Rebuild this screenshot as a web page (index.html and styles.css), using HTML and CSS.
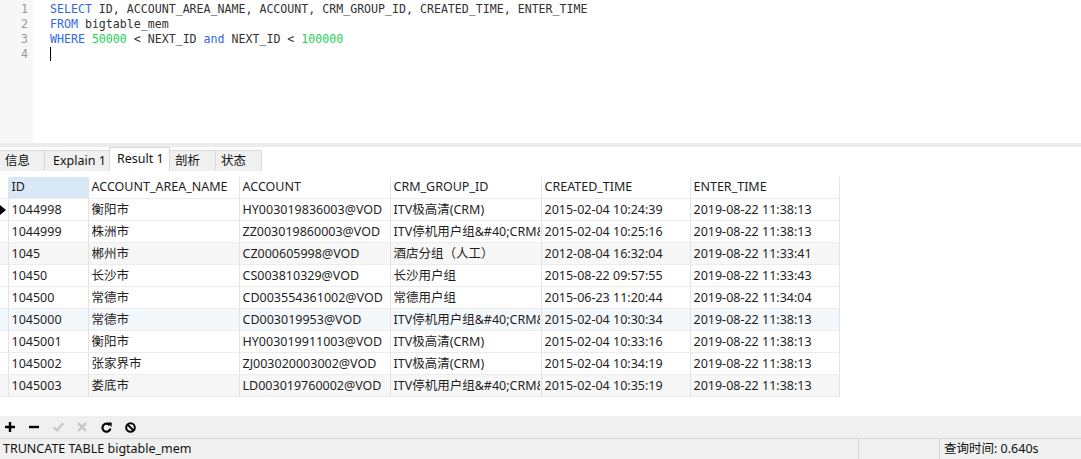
FILE: index.html
```html
<!DOCTYPE html>
<html lang="zh">
<head>
<meta charset="utf-8">
<title>Query</title>
<link rel="stylesheet" href="styles.css">
</head>
<body>
<div class="app">
  <div class="editor">
    <div class="gutter">
      <div class="ln">1</div>
      <div class="ln">2</div>
      <div class="ln">3</div>
      <div class="ln">4</div>
    </div>
    <div class="code">
      <div class="line"><span class="kw">SELECT</span> ID, ACCOUNT_AREA_NAME, ACCOUNT, CRM_GROUP_ID, CREATED_TIME, ENTER_TIME</div>
      <div class="line"><span class="kw">FROM</span> bigtable_mem</div>
      <div class="line"><span class="kw">WHERE</span> <span class="num">50000</span> &lt; NEXT_ID <span class="kw">and</span> NEXT_ID &lt; <span class="num">100000</span></div>
      <div class="line"><span class="cursor"></span></div>
    </div>
  </div>
  <div class="splitter"></div>
  <div class="tabs">
    <div class="tab w45">信息</div>
    <div class="tab w65">Explain 1</div>
    <div class="tab active w60">Result 1</div>
    <div class="tab w46">剖析</div>
    <div class="tab w46">状态</div>
  </div>
  <div class="grid-area">
    <table class="grid">
      <colgroup>
        <col class="c-ind"><col class="c-id"><col class="c-151"><col class="c-151"><col class="c-151"><col class="c-149"><col class="c-149">
      </colgroup>
      <thead>
        <tr><th class="ind"></th><th class="sel">ID</th><th>ACCOUNT_AREA_NAME</th><th>ACCOUNT</th><th>CRM_GROUP_ID</th><th>CREATED_TIME</th><th>ENTER_TIME</th></tr>
      </thead>
      <tbody>
        <tr><td class="ind"><span class="pointer"></span></td><td>1044998</td><td>衡阳市</td><td>HY003019836003@VOD</td><td>ITV极高清(CRM)</td><td>2015-02-04 10:24:39</td><td>2019-08-22 11:38:13</td></tr>
        <tr><td class="ind"></td><td>1044999</td><td>株洲市</td><td>ZZ003019860003@VOD</td><td><span class="clip">ITV停机用户组&amp;#40;CRM&amp;#41;</span></td><td>2015-02-04 10:25:16</td><td>2019-08-22 11:38:13</td></tr>
        <tr class="alt"><td class="ind"></td><td>1045</td><td>郴州市</td><td>CZ000605998@VOD</td><td>酒店分组（人工）</td><td>2012-08-04 16:32:04</td><td>2019-08-22 11:33:41</td></tr>
        <tr><td class="ind"></td><td>10450</td><td>长沙市</td><td>CS003810329@VOD</td><td>长沙用户组</td><td>2015-08-22 09:57:55</td><td>2019-08-22 11:33:43</td></tr>
        <tr><td class="ind"></td><td>104500</td><td>常德市</td><td>CD003554361002@VOD</td><td>常德用户组</td><td>2015-06-23 11:20:44</td><td>2019-08-22 11:34:04</td></tr>
        <tr class="hover"><td class="ind"></td><td>1045000</td><td>常德市</td><td>CD003019953@VOD</td><td><span class="clip">ITV停机用户组&amp;#40;CRM&amp;#41;</span></td><td>2015-02-04 10:30:34</td><td>2019-08-22 11:38:13</td></tr>
        <tr><td class="ind"></td><td>1045001</td><td>衡阳市</td><td>HY003019911003@VOD</td><td>ITV极高清(CRM)</td><td>2015-02-04 10:33:16</td><td>2019-08-22 11:38:13</td></tr>
        <tr><td class="ind"></td><td>1045002</td><td>张家界市</td><td>ZJ003020003002@VOD</td><td>ITV极高清(CRM)</td><td>2015-02-04 10:34:19</td><td>2019-08-22 11:38:13</td></tr>
        <tr class="alt"><td class="ind"></td><td>1045003</td><td>娄底市</td><td>LD003019760002@VOD</td><td><span class="clip">ITV停机用户组&amp;#40;CRM&amp;#41;</span></td><td>2015-02-04 10:35:19</td><td>2019-08-22 11:38:13</td></tr>
      </tbody>
    </table>
  </div>
  <div class="toolbar">
    <span class="tb-btn" title="添加">
      <svg width="10" height="10" viewBox="0 0 10 10"><path d="M3.8 0h2.4v3.8H10v2.4H6.2V10H3.8V6.2H0V3.8h3.8z" fill="#000"/></svg>
    </span>
    <span class="tb-btn" title="删除">
      <svg width="10" height="10" viewBox="0 0 10 10"><rect x="0" y="3.8" width="10" height="2.4" fill="#000"/></svg>
    </span>
    <span class="tb-btn" title="应用">
      <svg width="11" height="10" viewBox="0 0 11 10"><path d="M0.8 5.2L4 8.4 10.2 1.2" fill="none" stroke="#c6c6c6" stroke-width="2.2"/></svg>
    </span>
    <span class="tb-btn" title="取消">
      <svg width="10" height="10" viewBox="0 0 10 10"><path d="M1 1L9 9M9 1L1 9" stroke="#c6c6c6" stroke-width="2.4"/></svg>
    </span>
    <span class="tb-btn" title="刷新">
      <svg width="11" height="11" viewBox="0 0 11 11"><path d="M8.6 3.2A4 4 0 1 0 9.4 6.6" fill="none" stroke="#000" stroke-width="2.2"/><path d="M6.2 0.6L10.6 0.6 10.6 5Z" fill="#000"/></svg>
    </span>
    <span class="tb-btn" title="停止">
      <svg width="11" height="11" viewBox="0 0 11 11"><circle cx="5.5" cy="5.5" r="4.3" fill="none" stroke="#000" stroke-width="2"/><path d="M2.6 2.6L8.4 8.4" stroke="#000" stroke-width="2"/></svg>
    </span>
  </div>
  <div class="statusbar">
    <div class="st-main">TRUNCATE TABLE bigtable_mem</div>
    <div class="st-mid"></div>
    <div class="st-time">查询时间: 0.640s</div>
  </div>
</div>
</body>
</html>
```

FILE: styles.css
```css
html, body {
  margin: 0;
  padding: 0;
  background: #ffffff;
}
body {
  width: 1081px;
  height: 459px;
  overflow: hidden;
  font-family: "Noto Sans", "Noto Sans CJK SC", sans-serif;
  font-size: 12.5px;
  color: #1e1e1e;
}
.app {
  display: flex;
  flex-direction: column;
  height: 459px;
}

/* editor */
.editor {
  display: flex;
  height: 143px;
  flex: none;
  background: #ffffff;
}
.gutter {
  width: 33px;
  background: #f7f7f7;
  padding-top: 2px;
  box-sizing: border-box;
  font-family: "DejaVu Sans Mono", monospace;
  font-size: 11.6px;
  color: #9a9a9a;
}
.ln {
  height: 15px;
  line-height: 15px;
  text-align: right;
  padding-right: 5px;
}
.code {
  flex: 1;
  padding: 2px 0 0 17px;
  font-family: "DejaVu Sans Mono", monospace;
  font-size: 11.6px;
  color: #333333;
}
.line {
  height: 15px;
  line-height: 15px;
  white-space: pre;
}
.kw { color: #2f6ae0; }
.num { color: #1fcf58; }
.cursor {
  display: inline-block;
  width: 1px;
  height: 14px;
  background: #000;
  vertical-align: top;
}

.splitter {
  height: 4px;
  flex: none;
  background: #ececec;
}

/* tabs */
.tabs {
  display: flex;
  align-items: flex-end;
  height: 24px;
  flex: none;
  background: #ffffff;
}
.tab {
  box-sizing: border-box;
  height: 21px;
  line-height: 20px;
  padding-left: 6px;
  background: #f0f0f0;
  border: 1px solid #d9d9d9;
  border-bottom: none;
  border-left: none;
  font-size: 12.5px;
  color: #111;
}
.tab.active {
  height: 24px;
  line-height: 22px;
  background: #ffffff;
  border-left: 1px solid #d9d9d9;
  margin-left: -1px;
}
.w45 { width: 45px; padding-left: 5px; }
.w65 { width: 65px; padding-left: 8px; }
.w60 { width: 61px; padding-left: 7px; }
.w46 { width: 46px; padding-left: 5px; }

/* grid */
.grid-area {
  box-sizing: border-box;
  padding-top: 6px;
  height: 245px;
  flex: none;
  background: #ffffff;
}
.grid {
  border-collapse: collapse;
  table-layout: fixed;
  width: 839px;
}
.c-ind { width: 8px; }
.c-id { width: 80px; }
.c-151 { width: 151px; }
.c-149 { width: 149px; }
.grid th,
.grid td {
  box-sizing: border-box;
  padding: 0 0 0 3px;
  text-align: left;
  font-weight: normal;
  white-space: nowrap;
  overflow: hidden;
  border-right: 1px solid #e3e3e3;
  border-bottom: 1px solid #ececec;
  color: #1e1e1e;
}
.clip {
  display: block;
  width: 146px;
  overflow: hidden;
}
.grid th {
  height: 21px;
  line-height: 20px;
  background: #ffffff;
}
.grid th.sel {
  background: #d9e8f6;
}
.grid td {
  height: 22px;
  line-height: 21px;
}
.grid .ind {
  padding: 0;
  position: relative;
}
.pointer {
  position: absolute;
  left: 0;
  top: 6px;
  width: 0;
  height: 0;
  border-top: 5px solid transparent;
  border-bottom: 5px solid transparent;
  border-left: 6px solid #000;
}
.grid tr.alt td { background: #f7f7f7; }
.grid tr.hover td { background: #f3f8fd; }

/* toolbar */
.toolbar {
  display: flex;
  align-items: center;
  height: 22px;
  flex: none;
  background: #f0f0f0;
  padding-left: 5px;
}
.tb-btn {
  width: 24px;
  height: 22px;
  display: flex;
  align-items: center;
}

/* status */
.statusbar {
  display: flex;
  height: 21px;
  flex: none;
  background: #f0f0f0;
  border-top: 1px solid #d5d5d5;
  box-sizing: border-box;
  line-height: 20px;
  font-size: 12.5px;
  color: #111;
}
.st-main {
  width: 858px;
  padding-left: 3px;
  box-sizing: border-box;
}
.st-mid {
  width: 80px;
  border-left: 1px solid #d5d5d5;
}
.st-time {
  flex: 1;
  border-left: 1px solid #d5d5d5;
  padding-left: 4px;
}
```
